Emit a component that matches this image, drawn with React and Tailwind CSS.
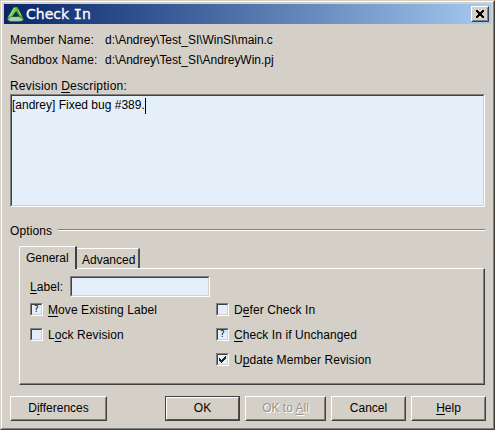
import React from "react";

const U = ({ children }) => (
  <span className="underline decoration-1 underline-offset-2">{children}</span>
);

function Check({ state, children }) {
  return (
    <label className="flex h-[25px] items-start">
      <span className="mr-1 flex size-[13px] shrink-0 border border-t-[#808080] border-l-[#808080] border-r-white border-b-white">
        <span className="flex size-[11px] items-center justify-center border border-t-[#404040] border-l-[#404040] border-r-[#d4d0c8] border-b-[#d4d0c8] bg-[#e4effa] font-['DejaVu_Sans'] text-[9px] leading-[9px]">
          {state === "mixed" && "?"}
          {state === "on" && (
            <svg className="size-[9px]" viewBox="0 0 9 9" shapeRendering="crispEdges">
              <path d="M1 3h1v1h1v1h1v-1h1v-1h1v-1h1v-1h1v3h-1v1h-1v1h-1v1h-1v1h-1v-1h-1v-1h-1z" fill="#222" />
            </svg>
          )}
        </span>
      </span>
      <span className="pl-px tracking-[0.08px]">{children}</span>
    </label>
  );
}

function Button({ width, children, focus, disabled }) {
  return (
    <button
      className={`h-[25px] shrink-0 border ${width} ${
        focus ? "border-[#404040]" : "border-t-white border-l-white border-r-[#404040] border-b-[#404040]"
      }`}
    >
      <span
        className={`flex h-full items-center justify-center border pb-px ${
          focus
            ? "border-t-white border-l-white border-r-[#505050] border-b-[#505050]"
            : "border-t-[#d4d0c8] border-l-[#d4d0c8] border-r-[#808080] border-b-[#808080]"
        } ${disabled ? "text-[#99958e] [text-shadow:1px_1px_0_#fff]" : ""}`}
      >
        <span className="whitespace-pre">{children}</span>
      </span>
    </button>
  );
}

export default function App() {
  return (
    <div className="h-[430px] w-[495px] overflow-hidden border border-t-[#d4d0c8] border-l-[#d4d0c8] border-r-[#404040] border-b-[#404040] bg-[#d4d0c8] font-['Liberation_Sans',Arial,sans-serif] text-[12px] leading-[14px] whitespace-nowrap text-black">
      <div className="h-[428px] border border-t-white border-l-white border-r-[#808080] border-b-[#808080] p-[2px]">
        <div className="flex h-5 items-center bg-linear-to-r from-[#0a246a] to-[#a6caf0] pr-[2px] pl-[3px]">
          <svg className="mr-[2px] h-4 w-[17px]" viewBox="0 0 17 16">
            <path d="M7 1h3.5L16 11l.5 3-3.5 1.5-3-3 2.5-1.5-4-6z" fill="#4aa83a" stroke="#173f1c" strokeWidth=".7" />
            <path d="M7 1 1 10.500 .5 14l3 1 1.500-4 5.500-6.500L10.500 1z" fill="#72cc4c" stroke="#1c5a20" strokeWidth=".7" />
            <path d="M.5 13.500 4 10.500h8l4.500 2.500-1 2L12 15.500H3z" fill="#a9cfa4" stroke="#286a2c" strokeWidth=".7" />
            <path d="M8.500 5.500 5.600 10.500h5.600z" fill="#12305a" />
            <path d="M7.300 2 2.500 10.500M10.500 3l3.500 6.500" stroke="#b6f58c" strokeWidth=".9" />
          </svg>
          <span className="flex-1 font-['DejaVu_Sans'] text-[14px] leading-5 text-white [-webkit-text-stroke:0.3px_white]">
            Check <span className="font-['DejaVu_Sans_Mono']">I</span>n
          </span>
          <button className="flex h-4 w-[18px] border border-t-white border-l-white border-r-[#404040] border-b-[#404040] bg-[#d4d0c8]">
            <span className="flex h-[14px] w-4 items-center justify-center border border-t-[#d4d0c8] border-l-[#d4d0c8] border-r-[#808080] border-b-[#808080]">
              <svg className="h-2 w-2" viewBox="0 0 8 8" shapeRendering="crispEdges">
                <path d="M0 0h2v1h1v1h2v-1h1v-1h2v2h-1v1h-1v2h1v1h1v2h-2v-1h-1v-1h-2v1h-1v1h-2v-2h1v-1h1v-2h-1v-1h-1z" />
              </svg>
            </span>
          </button>
        </div>

        <div className="w-[482px] pt-[9px] pl-[6px]">
          <div className="flex h-5">
            <span className="w-[95px] tracking-[0.1px]">Member Name:</span>
            <span className="tracking-[-0.03px]">d:\Andrey\Test_SI\WinSI\main.c</span>
          </div>
          <div className="flex h-[26px]">
            <span className="w-[95px] tracking-[0.1px]">Sandbox Name:</span>
            <span className="tracking-[-0.03px]">d:\Andrey\Test_SI\AndreyWin.pj</span>
          </div>
          <div className="h-[15px] tracking-[0.2px]">
            Revision <U>D</U>escription:
          </div>
          <div className="h-[113px] w-[475px] border border-t-[#808080] border-l-[#808080] border-r-white border-b-white">
            <div className="flex h-[111px] border border-t-[#404040] border-l-[#404040] border-r-[#d4d0c8] border-b-[#d4d0c8] bg-[#e4effa] pt-[2px]">
              <span>[andrey] Fixed bug #389.</span>
              <span className="h-4 w-px bg-black" />
            </div>
          </div>
          <div className="mt-[17px] flex h-[22px] w-[475px] items-start">
            <span className="w-[48px] tracking-[0.1px]">Options</span>
            <span className="mt-[5px] h-[2px] flex-1 border-t border-b border-t-[#808080] border-b-white" />
          </div>

          <div className="w-[475px] pl-[9px]">
            <div className="flex h-[22px] items-end">
              <div className="z-10 -mb-px h-[23px] w-[58px] rounded-tl-[2px] border-t border-r-2 border-l border-t-white border-r-[#404040] border-l-white bg-[#d4d0c8] pt-1 pl-[6px]">
                General
              </div>
              <div className="h-[20px] w-[63px] border-t border-r-2 border-t-white border-r-[#505050] pt-1 pl-[5px]">
                Advanced
              </div>
            </div>
            <div className="h-[117px] w-[466px] border border-t-white border-l-white border-r-[#404040] border-b-[#404040]">
              <div className="h-[115px] border-r border-b border-[#808080] pt-[7px] pl-[10px]">
                <div className="flex h-[27px]">
                  <span className="w-10 pt-1 tracking-[0.1px]"><U>L</U>abel:</span>
                  <div className="h-[21px] w-[140px] border border-t-[#808080] border-l-[#808080] border-r-white border-b-white">
                    <div className="h-[19px] border border-t-[#404040] border-l-[#404040] border-r-[#d4d0c8] border-b-[#d4d0c8] bg-[#e4effa]" />
                  </div>
                </div>
                <div className="flex">
                  <div className="w-[186px]">
                    <Check state="mixed"><U>M</U>ove Existing Label</Check>
                    <Check>L<U>o</U>ck Revision</Check>
                  </div>
                  <div>
                    <Check>D<U>e</U>fer Check In</Check>
                    <Check state="mixed"><U>C</U>heck In if Unchanged</Check>
                    <Check state="on">U<U>p</U>date Member Revision</Check>
                  </div>
                </div>
              </div>
            </div>
          </div>

          <div className="mt-[11px] flex w-[476px] gap-[5px]">
            <Button width="w-[97px]">D<U>i</U>fferences</Button>
            <div className="flex-1" />
            <Button width="w-[75px]" focus>OK</Button>
            <Button width="w-[81px]" disabled>OK to <U>A</U>ll</Button>
            <Button width="w-[75px]">Cancel</Button>
            <Button width="w-[75px]"><U>H</U>elp</Button>
          </div>
        </div>
      </div>
    </div>
  );
}
